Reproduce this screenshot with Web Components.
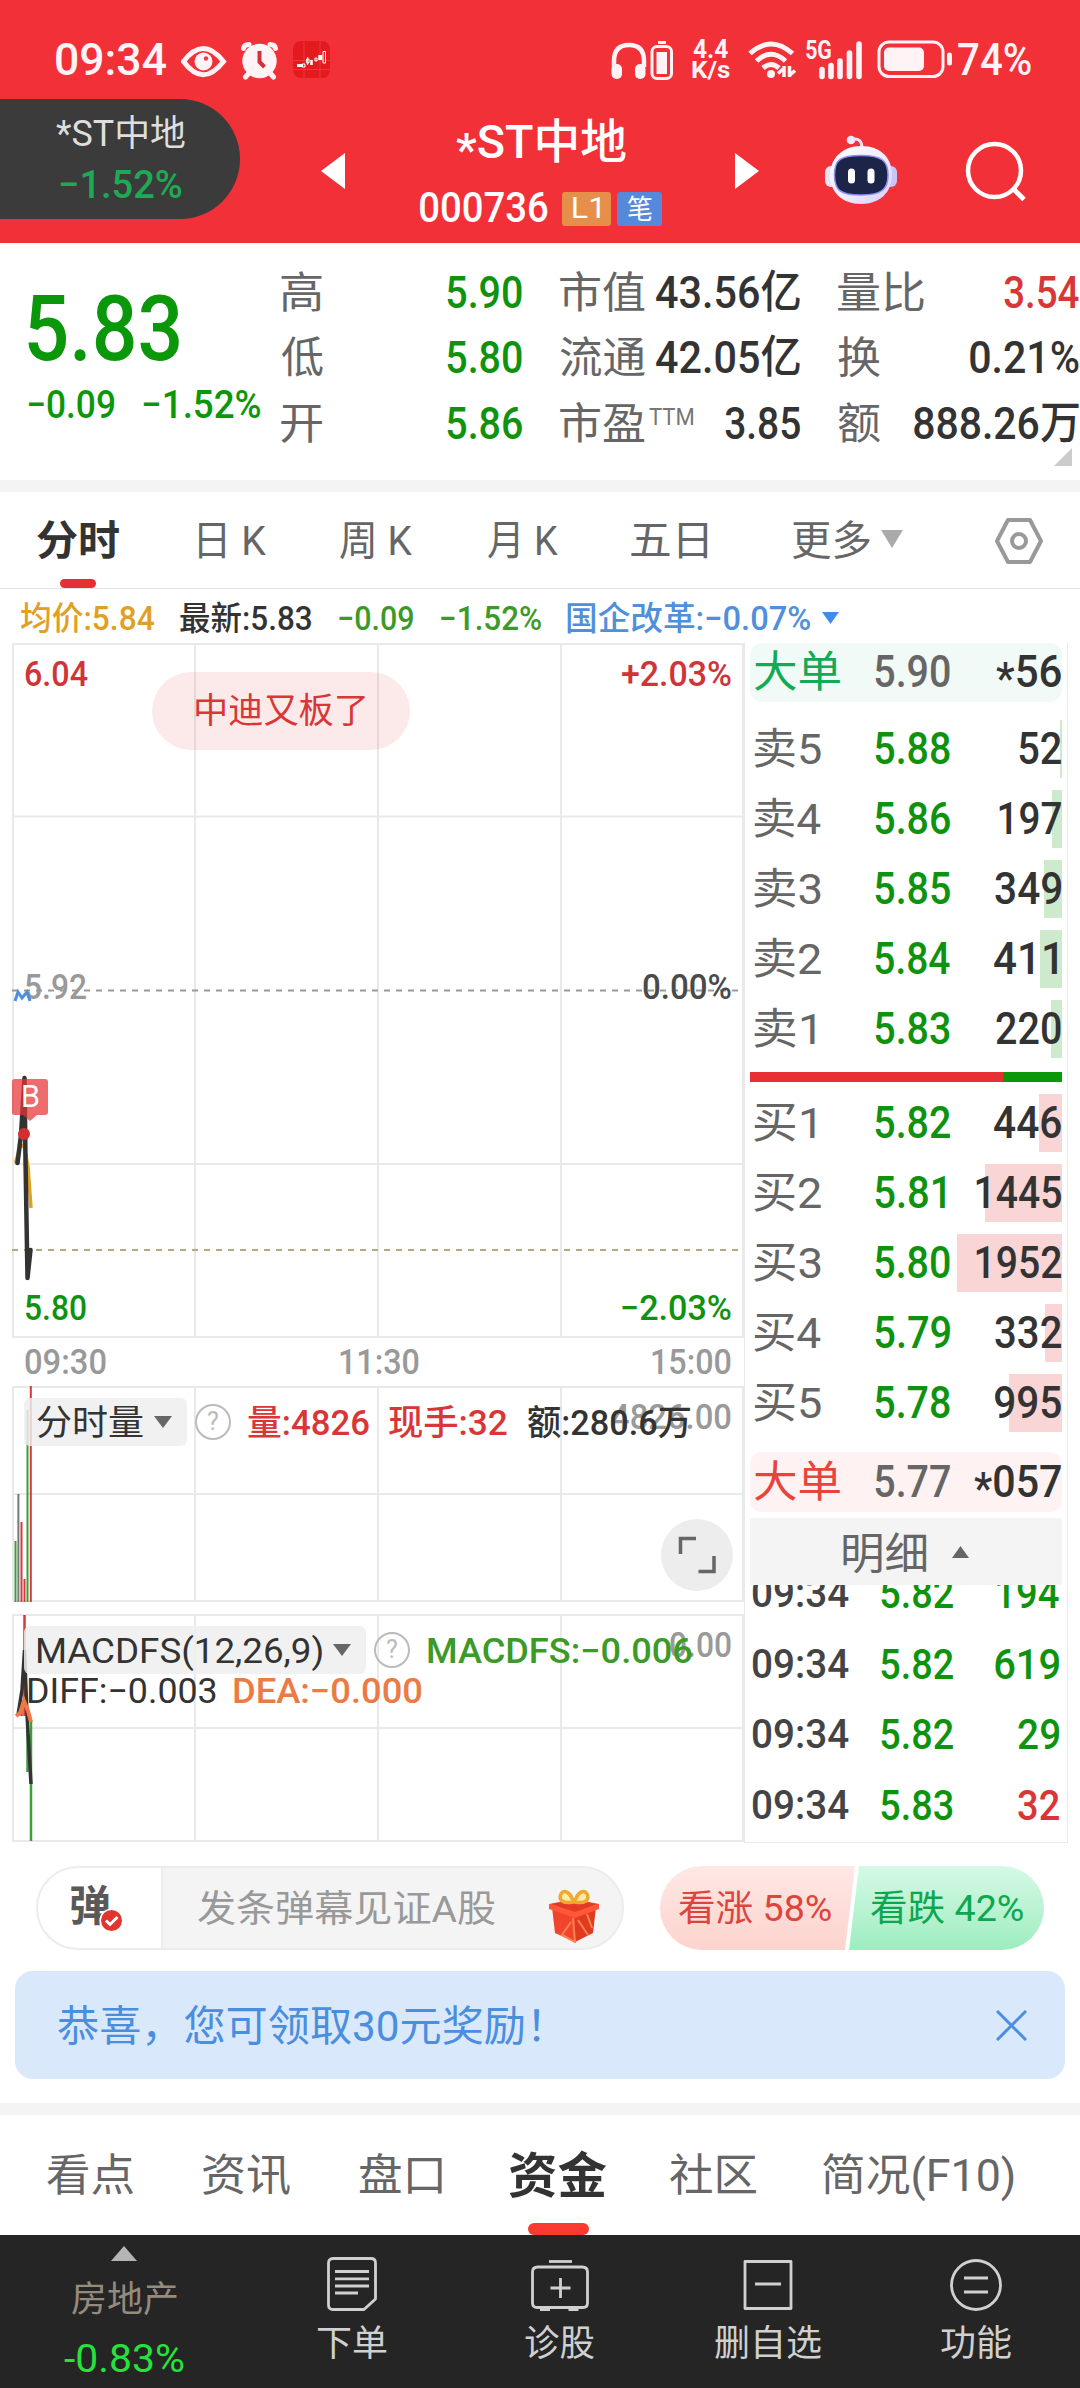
<!DOCTYPE html>
<html lang="zh-CN">
<head>
<meta charset="utf-8">
<title>*ST中地 000736</title>
<style>
  html, body { margin:0; padding:0; background:#fff; }
  body { width:1080px; height:2388px; overflow:hidden; color:#333;
    font-family:Roboto,"Noto Sans CJK SC",sans-serif; }
  stock-app { --up:#d93638; --down:#0f930f; --muted:#666; --line:#e9e9e9; --dy:2px; }
</style>
</head>
<body>
<stock-app>
  <status-bar></status-bar>
  <stock-header></stock-header>
  <quote-board></quote-board>
  <period-tabs>
    <period-tab w="82" active>分时</period-tab>
    <period-tab w="67">日 K</period-tab>
    <period-tab w="72">周 K</period-tab>
    <period-tab w="70">月 K</period-tab>
    <period-tab w="77">五日</period-tab>
    <period-tab w="78" more>更多</period-tab>
  </period-tabs>
  <info-line></info-line>
  <trade-area>
    <price-chart slot="charts"></price-chart>
    <volume-chart slot="charts"></volume-chart>
    <macd-chart slot="charts"></macd-chart>
    <order-book slot="book"></order-book>
  </trade-area>
  <danmu-bar></danmu-bar>
  <bonus-banner>恭喜，您可领取30元奖励！</bonus-banner>
  <section-tabs></section-tabs>
  <bottom-nav>
    <nav-item w="70" label="下单">
      <svg width="50" height="54" viewBox="0 0 50 54"><path d="M6 1.5H44Q48.500 1.500 48.500 6V42L37 52.500H6Q1.500 52.500 1.500 48V6Q1.500 1.500 6 1.500Z"/><path d="M8 14.500H42M8 21.800H42M8 29H42M8 36H31"/></svg>
    </nav-item>
    <nav-item w="69" label="诊股">
      <svg width="58" height="54" viewBox="0 0 58 54"><path d="M18 4.500H41"/><path d="M7 10H51Q56.500 10 56.500 15V46Q56.500 50.500 52 50.500H6Q1.500 50.500 1.500 46V15Q1.500 10 7 10ZM29.500 21V41M19.500 31H39.500M9 53H19M37.500 53H47.500"/></svg>
    </nav-item>
    <nav-item w="106" label="删自选">
      <svg width="50" height="54" viewBox="0 0 50 54"><path d="M2 4.500H48V51.500H2ZM12 27H38"/></svg>
    </nav-item>
    <nav-item w="70" label="功能">
      <svg width="52" height="54" viewBox="0 0 52 54"><circle cx="26" cy="28" r="24.500"/><path d="M14 21H38M14 35H38"/></svg>
    </nav-item>
  </bottom-nav>
</stock-app>

<script>
(function(){
  // 简单组件：样式 + 模板
  const define = (name, css, html) => {
    customElements.define(name, class extends HTMLElement {
      constructor(){
        super();
        const root = this.attachShadow({mode:'open'});
        root.innerHTML = `<style>:host{display:block;box-sizing:border-box} svg{display:block;flex:none} ${css}</style>`
          + (typeof html === 'function' ? html(this) : html);
      }
    });
  };

  // 文字按指定宽度横向缩放，模拟窄体数字
  const ctx = document.createElement('canvas').getContext('2d');
  class FitText extends HTMLElement {
    constructor(){
      super();
      this.attachShadow({mode:'open'}).innerHTML = `
        <style>
          :host{ display:block; flex:none; white-space:nowrap; line-height:40px; }
          span{ display:inline-block; transform-origin:0 50%; }
          ::slotted(i){ font-style:normal; vertical-align:-.16em; line-height:0; }
        </style><span><slot></slot></span>`;
    }
    connectedCallback(){
      const w = Number(this.getAttribute('w'));
      if (this.hasAttribute('s')) this.style.fontSize = this.getAttribute('s') + 'px';
      if (this.hasAttribute('c')) this.style.color = this.getAttribute('c');
      if (this.hasAttribute('b')) this.style.fontWeight = this.getAttribute('b');
      const cs = getComputedStyle(this);
      ctx.font = `${cs.fontWeight} ${cs.fontSize} ${cs.fontFamily}`;
      const m = ctx.measureText(this.textContent.trim());
      const k = w / (m.actualBoundingBoxRight + m.actualBoundingBoxLeft);
      this.style.width = w + 'px';
      this.shadowRoot.querySelector('span').style.transform =
        `translate(${m.actualBoundingBoxLeft * k}px, var(--dy, 0px)) scaleX(${k})`;
    }
  }
  customElements.define('fit-text', FitText);

  define('stock-app', ':host{width:1080px;display:flex;flex-direction:column}', '<slot></slot>');

  define('status-bar', `
    :host{display:flex;height:99px;padding:40px 0 0 56px;background:#f13038;color:#fff3f5;font-weight:500;--dy:0px}
    .speed{margin-left:17px;font-weight:700} .speed fit-text{line-height:20px}
  `, `
    <fit-text w="110" s="44">09:34</fit-text>
    <svg width="150" height="40" viewBox="181 40 150 40" style="margin-left:15px">
      <path d="M183.500 61.500Q203 35.500 223.500 61.500Q203 88 183.500 61.500Z" fill="none" stroke="#fff3f5" stroke-width="5"/>
      <circle cx="203.500" cy="61.500" r="9" fill="#fff3f5"/><circle cx="206" cy="58.500" r="2.200" fill="#e0424a"/>
      <g fill="none" stroke="#fff3f5" stroke-linecap="round" stroke-width="5"><path d="M243.500 48.500Q244 44.500 249 44.500M275.500 48.500Q275 44.500 270 44.500M249 73L245.500 77M270 73L273.500 77"/></g>
      <circle cx="259.500" cy="61" r="17.200" fill="#fff3f5"/><path d="M259.500 51V62L264.500 67" fill="none" stroke="#d2303a" stroke-width="4"/>
      <rect x="293" y="41" width="37" height="37" rx="8" fill="#e31b1f"/>
      <path d="M304 41V78M320 41V78M293 60.500H330M293 69.500H330" stroke="#ef4245" stroke-width=".7"/>
      <path d="M297 65.500H303" stroke="#fff" stroke-width="3"/><g fill="none" stroke="#fff" stroke-width="1"><path d="M302 64H305V67H302ZM306.500 59H309V63H306.500ZM307.700 57V65M315 58H317V61H315ZM323 51.500H325.500V63H323Z"/></g>
      <path d="M311.500 60V65M319.500 55V60M321 55V60" stroke="#fff" stroke-width="2.500"/>
    </svg>
    <svg width="64" height="40" viewBox="611 40 64 40" style="margin-left:280px">
      <path d="M614 67V61Q614 45 629 45T644 61V67" fill="none" stroke="#fff3f5" stroke-width="4.500"/>
      <rect x="611.500" y="64" width="10.500" height="15" rx="5" fill="#fff3f5"/><rect x="635" y="64" width="10.500" height="15" rx="5" fill="#fff3f5"/>
      <rect x="652" y="46.500" width="19.500" height="32" rx="5" fill="none" stroke="#fff3f5" stroke-width="3"/>
      <path d="M658 42.500H666" stroke="#fff3f5" stroke-width="3"/><path d="M656.500 52H667V74H656.500Z" fill="#fff3f5"/>
    </svg>
    <div class="speed"><fit-text w="35" s="25" style="margin-left:1px">4.4</fit-text><fit-text w="38" s="24">K/s</fit-text></div>
    <svg width="48" height="40" viewBox="749 40 48 40" style="margin-left:18px">
      <g fill="none" stroke="#fff3f5" stroke-width="5"><path d="M751 53.500Q772 34.500 793.500 53.500"/><path d="M757.500 61Q772 47.500 786.500 61"/><path d="M764 68Q772 61 780 68"/></g>
      <circle cx="772" cy="74" r="4" fill="#fff3f5"/>
      <path d="M785 66V77M779 73.500L784 69M790.500 66V77M796 70.500L791 75" stroke="#fff3f5" stroke-width="3.500"/>
    </svg>
    <fit-text w="25" s="25" b="700" style="line-height:21px;margin-left:10px">5G</fit-text>
    <svg width="44" height="40" viewBox="820 40 44 40" style="margin-left:-12px">
      <path d="M823 69.500V76.500M832 65.500V76.500M841 61V76.500M850.500 53V76.500M860 44V76.500" stroke="#fff3f5" stroke-width="5.600" stroke-linecap="round"/>
    </svg>
    <svg width="76" height="40" viewBox="878 40 76 40" style="margin-left:14px">
      <rect x="880" y="42" width="64" height="34.500" rx="10" fill="none" stroke="#fff3f5" stroke-width="3"/>
      <rect x="885" y="47.500" width="40" height="23.500" rx="5" fill="#fff3f5"/><path d="M950.500 55V63" stroke="#fff3f5" stroke-width="5" stroke-linecap="round"/>
    </svg>
    <fit-text w="73" s="44" style="margin-left:5px">74%</fit-text>
  `);

  define('stock-header', `
    :host{display:flex;height:144px;background:#f13038;color:#fff;align-items:center}
    .prev{align-self:flex-start;width:240px;height:120px;box-sizing:border-box;padding-top:13px;background:#3b3b3b;border-radius:0 60px 60px 0}
    .mid{width:390px;display:flex;flex-direction:column;align-items:center;align-self:flex-start;padding:15px 0 0 2px;box-sizing:border-box}
    .mid>fit-text{line-height:52px}
    .code{display:flex;margin-top:23px;align-items:center;--dy:-1px}
    .tag{height:34px;border-radius:3px;display:flex;justify-content:center;background:#e58f4a}
    .tag fit-text{line-height:34px}
  `, `
    <div class="prev">
      <fit-text w="129" s="36" c="#dedede" style="margin-left:56px">*ST中地</fit-text>
      <fit-text w="121" s="39" c="#1fa955" b="500" style="margin:11px 0 0 60px">−1.52%</fit-text>
    </div>
    <svg width="24" height="36" style="margin-left:81px"><path d="M0 18L24 0V36Z" fill="#fff"/></svg>
    <div class="mid">
      <fit-text w="170" s="47" b="500"><i>*</i>ST中地</fit-text>
      <div class="code">
        <fit-text w="128" s="42" b="500">000736</fit-text>
        <span class="tag" style="width:49px;margin-left:14px"><fit-text w="27" s="30">L1</fit-text></span>
        <span class="tag" style="width:45px;margin-left:6px;background:#5688db"><fit-text w="25" s="27" style="--dy:1px">笔</fit-text></span>
      </div>
    </div>
    <svg width="24" height="36"><path d="M24 18L0 0V36Z" fill="#fff"/></svg>
    <svg width="72" height="72" viewBox="0 0 72 72" style="margin:0 0 6px 66px">
      <defs><linearGradient id="h" x2="1" y2="1"><stop stop-color="#fff"/><stop offset=".55" stop-color="#f0eaff"/><stop offset="1" stop-color="#d3cfff"/></linearGradient></defs>
      <circle cx="26" cy="8" r="4.300" fill="#eee9ff"/><path d="M28 7Q37 6 37 16" fill="none" stroke="#e9e3ff" stroke-width="3"/>
      <rect x="0" y="34" width="12" height="21" rx="6" fill="#e7e3fa"/><rect x="60" y="34" width="12" height="21" rx="6" fill="#c9c4f8"/>
      <path d="M36 14C57 14 67 27 67 43C67 60 55 72 36 72C17 72 5 60 5 43C5 27 17 14 36 14Z" fill="url(#h)"/>
      <path d="M36 23.500C57 23.500 63 29 63 43S57 63 36 63S9.500 58 9.500 43S15 23.500 36 23.500Z" fill="#1c2547" stroke="#8c8cf0" stroke-width="1.500"/>
      <path d="M26.500 40V48M46 40V48" stroke="#fff" stroke-width="7" stroke-linecap="round"/>
    </svg>
    <svg width="62" height="62" viewBox="964 139 62 62" style="margin-left:67px"><circle cx="994.500" cy="169.500" r="26.500" fill="none" stroke="#fff" stroke-width="4.500"/><path d="M1013.500 188L1024 198.500" stroke="#fff" stroke-width="5"/></svg>
  `);

  const cell = (label, lw, val, vw, color, extra = '') =>
    `<div class="cell"><fit-text w="${lw}" s="43" c="#666">${label}</fit-text>${extra}<fit-text class="v" w="${vw}" s="45" b="500" c="${color}">${val}</fit-text></div>`;
  define('quote-board', `
    :host{display:flex;position:relative;height:249px;padding-top:15px;border-bottom:12px solid #f4f4f4}
    .now{width:281px;flex:none;box-sizing:border-box;padding:24px 0 0 28px;color:#0a970a}
    .chg{display:flex;gap:29px;margin-top:11px}
    .col{width:240.5px;margin-right:38px;flex:none}
    .col:last-of-type{margin-right:0}
    .cell{display:flex;height:65.500px;align-items:center}
    .v{margin-left:auto}
    .corner{position:absolute;right:8px;top:205px}
  `, `
    <div class="now"><fit-text w="151" s="91" b="500" style="line-height:90px">5.83</fit-text>
      <div class="chg"><fit-text w="86" s="39" b="500">−0.09</fit-text><fit-text w="117" s="39" b="500">−1.52%</fit-text></div></div>
    <div class="col">${cell('高',41,'5.90',75,'var(--down)')}${cell('低',42,'5.80',75,'var(--down)')}${cell('开',41,'5.86',75,'var(--down)')}</div>
    <div class="col">${cell('市值',85,'43.56亿',144,'#333')}${cell('流通',85,'42.05亿',144,'#333')}${cell('市盈',85,'3.85',75,'#333','<fit-text w="44" s="24" c="#777" style="line-height:24px;margin:-14px 0 0 4px">TTM</fit-text>')}</div>
    <div class="col">${cell('量比',86,'3.54',75,'var(--up)')}${cell('换',42,'0.21%',109,'#333')}${cell('额',42,'888.26万',165,'#333')}</div>
    <svg class="corner" width="18" height="18"><path d="M18 0V18H0Z" fill="#ccc"/></svg>
  `);

  define('period-tab', `
    :host{display:flex;flex-direction:column;align-items:center;justify-content:flex-end;height:97px;color:#666;font-size:41px}
    .t{display:flex;align-items:center;gap:11px;height:74px;margin-bottom:3px}
    .bar{width:36px;height:9px;border-radius:5px;margin-bottom:1px}
    :host([active]){color:#333;font-weight:700} :host([active]) .bar{background:#e52f33}
  `, el => `<div class="t"><fit-text w="${el.getAttribute('w')}">${el.textContent}</fit-text>${el.hasAttribute('more') ? '<svg width="22" height="18"><path d="M0 0H22L11 18Z" fill="#aaa"/></svg>' : ''}</div><div class="bar"></div>`);

  define('period-tabs', `
    :host{display:grid;grid-template-columns:156px 153px 134px 160px 133px 222px 122px;height:97px;border-bottom:1px solid #e4e4e4}
    svg{place-self:center}
  `, `<slot></slot>
    <svg width="50" height="50" viewBox="0 0 50 50" fill="none" stroke="#999" stroke-width="4"><path stroke-linejoin="round" d="M14 4H36L47 25L36 46H14L3 25Z"/><circle cx="25" cy="25" r="7"/></svg>`);

  define('info-line', `:host{display:flex;height:54px;padding-left:21px;align-items:center;font-size:33px;font-weight:500;--dy:3px}`, `
    <fit-text w="133" c="#dfa024">均价:5.84</fit-text>
    <fit-text w="131" c="#333" style="margin-left:26px">最新:5.83</fit-text>
    <fit-text w="74" c="#3c9a28" style="margin-left:28px">−0.09</fit-text>
    <fit-text w="100" c="#3c9a28" style="margin-left:28px">−1.52%</fit-text>
    <fit-text w="243" c="#4f8fdc" style="margin-left:26px">国企改革:−0.07%</fit-text>
    <svg width="17" height="12" style="margin:4px 0 0 12px"><path d="M0 0H17L8.500 12Z" fill="#3f8cec"/></svg>`);

  define('trade-area', `
    :host{display:flex;height:1201px}
    .charts{width:744px;display:flex;flex-direction:column}
  `, `<div class="charts"><slot name="charts"></slot></div><slot name="book"></slot>`);

  // 图表坐标统一使用整页坐标
  const grid = (top, bottom, mid) => `<g stroke="#e9e9e9" stroke-width="2" fill="none">
    <path d="M13 ${top}H743V${bottom}H13ZM195 ${top}V${bottom}M378 ${top}V${bottom}M561 ${top}V${bottom}"/><path d="${mid.map(y => `M13 ${y}H743`).join('')}"/></g>`;
  const label = (x, y, w, text, color, size = 35, weight = 500) =>
    `<text x="${x}" y="${y}" textLength="${w}" lengthAdjust="spacingAndGlyphs" fill="${color}" font-size="${size}" font-weight="${weight}">${text}</text>`;

  define('price-chart', ':host{height:742px}', `
    <svg width="744" height="742" viewBox="0 643 744 742">
      ${grid(644, 1337, [816.5, 1164])}
      <path d="M12 990.500H743" stroke="#999" stroke-width="2" stroke-dasharray="6 6"/>
      <path d="M12 1250H743" stroke="#b8a87f" stroke-width="2" stroke-dasharray="6 6"/>
      <rect x="152" y="672" width="258" height="78" rx="39" fill="#e52f33" fill-opacity=".1"/>
      ${label(193, 723, 176, '中迪又板了', '#d93638', 35, 400)}
      ${label(24, 686, 64, '6.04', '#cf3537')}${label(621, 686, 111, '+2.03%', '#cf3537')}
      ${label(24, 999, 63, '5.92', '#999')}${label(642, 999, 90, '0.00%', '#4a4a4a')}
      ${label(24, 1320, 63, '5.80', '#0f930f')}${label(620, 1320, 112, '−2.03%', '#0f930f')}
      ${label(24, 1374, 83, '09:30', '#999')}${label(338, 1374, 82, '11:30', '#999')}${label(650, 1374, 82, '15:00', '#999')}
      <path d="M15 1001L18 992L22 998L27 992L30 1001" fill="none" stroke="#4b8fde" stroke-width="3"/>
      <path d="M15.500 1163L20 1147L24 1145L28 1167L31 1208" fill="none" stroke="#e0a020" stroke-width="3.500"/>
      <path d="M17.500 1163L21 1135L24.500 1078L25.500 1160L27.500 1278L30.500 1250" fill="none" stroke="#333" stroke-width="4.500" stroke-linejoin="round" stroke-linecap="round"/>
      <path d="M21 1135L24.500 1090L26 1130Z" fill="#333"/>
      <path d="M15 1079H45Q48 1079 48 1082V1112Q48 1115 45 1115H37L30 1121L23 1115H15Q12 1115 12 1112V1082Q12 1079 15 1079Z" fill="#e83335" fill-opacity=".72"/>
      ${label(21, 1107, 19, 'B', '#fff', 31, 400)}
      <circle cx="24" cy="1134" r="6" fill="#d22f31"/>
    </svg>`);

  define('chart-menu', `
    :host{display:flex;align-items:center;height:48px;font-size:35px}
    .tag{display:flex;align-items:center;gap:11px;height:48px;padding:0 15px 0 13px;margin-right:8px;border-radius:6px;background:rgba(238,238,238,.84);color:#333}
    .q{width:36px;height:36px;box-sizing:border-box;border:2.500px solid #bbb;border-radius:50%;color:#bbb;font-size:25px;line-height:32px;text-align:center}
  `, el => `<div class="tag"><fit-text w="${el.getAttribute('w')}">${el.getAttribute('name')}</fit-text><svg width="18" height="12"><path d="M0 0H18L9 12Z" fill="#666"/></svg></div><div class="q">?</div><slot></slot>`);

  define('volume-chart', `
    :host{position:relative;height:229px}
    chart-menu{position:absolute;left:24px;top:13px}
    .full{position:absolute;left:661px;top:134px}
  `, `
    <svg width="744" height="229" viewBox="0 1385 744 229">
      ${grid(1387, 1601, [1494])}
      <g stroke-width="2"><path d="M15.500 1541V1602M27.500 1410V1602" stroke="#3f9c3a"/><path d="M18.400 1494V1602" stroke="#777"/><path d="M21.500 1522V1602M24.500 1579V1602M30.800 1386V1602" stroke="#d23a3c"/></g>
      ${label(611, 1429, 121, '4826.00', '#999')}
    </svg>
    <chart-menu w="106" name="分时量">
      <fit-text w="121" b="500" c="#d93638" style="margin-left:17px">量:4826</fit-text>
      <fit-text w="118" b="500" c="#d93638" style="margin-left:20px">现手:32</fit-text>
      <fit-text w="162" b="500" c="#333" style="margin-left:21px">额:280.6万</fit-text>
    </chart-menu>
    <svg class="full" width="72" height="72"><circle cx="36" cy="36" r="36" fill="#ededed"/><path d="M19.500 35V19.500H35M53 37V52.500H37.500" fill="none" stroke="#666" stroke-width="3.500"/></svg>`);

  define('macd-chart', `
    :host{position:relative;height:230px}
    chart-menu{position:absolute;left:24px;top:12px}
    .line2{position:absolute;left:28px;top:56px;display:flex;gap:18px;font-size:35px}
  `, `
    <svg width="744" height="230" viewBox="0 1614 744 230">
      ${grid(1615, 1841, [1728])}
      <path d="M24.500 1615V1716M21.500 1700V1716" stroke="#d23a3c" stroke-width="2.500"/>
      <path d="M31 1720V1841M27.500 1716V1772" stroke="#3f9c3a" stroke-width="2.500"/>
      <path d="M18 1715L22 1690L24.500 1650L27 1715L31 1784" fill="none" stroke="#333" stroke-width="3.500"/>
      <path d="M16 1716L20 1713L24 1701L28 1711L31 1722" fill="none" stroke="#ec7a45" stroke-width="4"/>
      ${label(669, 1657, 63, '0.00', '#999')}
    </svg>
    <chart-menu w="285" name="MACDFS(12,26,9)"><fit-text w="264" b="500" c="#3c9a28" style="margin-left:18px">MACDFS:−0.006</fit-text></chart-menu>
    <div class="line2"><fit-text w="188" c="#333">DIFF:−0.003</fit-text><fit-text w="188" b="500" c="#ec7a45">DEA:−0.000</fit-text></div>`);

  define('book-row', `
    :host{display:flex;align-items:center;height:58px;padding:0 1px 0 4px;margin-bottom:12px;font-size:45px}
    .l{width:121px;flex:none}
    .v{margin-left:auto}
    :host([kind=sell]){background:linear-gradient(#cdeacd,#cdeacd) right/var(--bar) 100% no-repeat}
    :host([kind=buy]){background:linear-gradient(#f9d5d6,#f9d5d6) right/var(--bar) 100% no-repeat}
    :host([kind=bigsell]){height:59px;margin:0 0 18px;border-radius:12px;background:#f1faf6;--dy:-1px}
    :host([kind=bigbuy]){height:60px;margin:20px 0 6px;border-radius:12px;background:#fef3f2}
  `, el => {
    const a = n => el.getAttribute(n), big = a('kind').startsWith('big');
    const lc = a('kind') === 'bigsell' ? '#12aa54' : big ? '#e8433c' : '#666';
    return `<div class="l"><fit-text w="${big ? 86 : a('lw') || 67}" s="43" c="${lc}">${a('label')}</fit-text></div>
      <fit-text w="${a('price').endsWith('1') ? 70 : 75}" b="500" c="${big ? '#666' : '#0f930f'}">${a('price')}</fit-text>
      <fit-text class="v" w="${a('w')}" b="500" c="#333" ${a('label') === '卖2' ? 'style="margin-right:4px"' : ''}>${a('vol').replace('*', '<i>*</i>')}</fit-text>`;
  });

  const rows = (kind, list) => list.map(([l, p, v, w, bar, lw]) =>
    `<book-row kind="${kind}" label="${l}" price="${p}" vol="${v}" w="${w}" lw="${lw || 67}" style="--bar:${bar}px"></book-row>`).join('');
  const tick = (p, v, w, c) => `<div class="tick"><fit-text w="96" s="41" b="500" c="#444">09:34</fit-text>
    <fit-text w="72" s="43" b="500" c="#0f930f">${p}</fit-text><fit-text class="v" w="${w}" s="43" b="500" c="${c}">${v}</fit-text></div>`;
  define('order-book', `
    :host{width:324px;height:1200px;border:1px solid #e9e9e9;border-top:0;padding:0 5px;display:flex;flex-direction:column;--dy:0px}
    .ratio{height:10px;margin:2px 0 12px;background:linear-gradient(90deg,#e73033 81%,#0a970a 81%);flex:none}
    .head{height:67px;background:#f4f4f4;display:flex;align-items:center;justify-content:center;gap:26px;flex:none;--dy:2px}
    .ticks{flex:1;min-height:0;overflow:hidden;--dy:-1px}
    .tick{display:flex;align-items:center;height:70.500px;padding:0 3px}
    .tick:first-child{margin-top:-26px}
    .tick>:nth-child(2){margin-left:32px} .v{margin-left:auto}
  `, `
    ${rows('bigsell', [['大单','5.90','*56',65,0]])}
    ${rows('sell', [['卖5','5.88','52',42,2],['卖4','5.86','197',62,10],['卖3','5.85','349',66,18],['卖2','5.84','411',63,22],['卖1','5.83','220',65,11,61]])}
    <div class="ratio"></div>
    ${rows('buy', [['买1','5.82','446',67,23,61],['买2','5.81','1445',85,77],['买3','5.80','1952',85,105],['买4','5.79','332',66,17]])}
    <book-row kind="buy" label="买5" price="5.78" vol="995" w="66" style="--bar:53px;margin-bottom:0"></book-row>
    ${rows('bigbuy', [['大单','5.77','*057',87,0]])}
    <div class="head"><fit-text w="83" s="43" c="#666">明细</fit-text><svg width="17" height="12"><path d="M0 12H17L8.500 0Z" fill="#666"/></svg></div>
    <div class="ticks">${tick('5.82','194',62,'#0f930f')}${tick('5.82','619',64,'#0f930f')}${tick('5.82','29',41,'#0f930f')}${tick('5.83','32',41,'#d93638')}</div>`);

  define('danmu-bar', `
    :host{display:flex;height:127px;padding:22px 36px 0}
    .input{width:588px;height:84px;box-sizing:border-box;border:2px solid #ececec;border-radius:42px;background:linear-gradient(90deg,#fff 123px,#ececec 123px,#ececec 125px,#f4f4f4 125px);display:flex;align-items:center}
    .vote{display:flex;margin-left:36px;width:384px;height:84px;border-radius:42px;overflow:hidden;--dy:1px}
    .vote>div{display:flex;align-items:center;height:84px}
    .up{width:199px;background:linear-gradient(#fee8e5,#fdd3cd);clip-path:polygon(0 0,195px 0,185px 100%,0 100%);padding-left:19px;box-sizing:border-box}
    .down{width:195px;margin-left:-10px;padding-left:22px;box-sizing:border-box;background:linear-gradient(#d6f9e6,#9eedbf);clip-path:polygon(10px 0,100% 0,100% 100%,0 100%)}
  `, `
    <div class="input">
      <svg width="54" height="54" viewBox="70 1880 54 54" style="margin-left:32px">
        <text x="69" y="1920" font-size="42" font-weight="700" fill="#595959">弹</text>
        <circle cx="111.500" cy="1919.500" r="12" fill="#fff"/><circle cx="111.500" cy="1919.500" r="10.500" fill="#e0362f"/><path d="M106 1919.500L110 1923.500L117.500 1916" fill="none" stroke="#fff" stroke-width="3"/>
      </svg>
      <fit-text w="297" s="37" c="#999" style="margin-left:74px">发条弹幕见证A股</fit-text>
      <svg width="54" height="54" viewBox="0 0 54 54" style="margin:16px 0 0 52px">
        <path d="M5 18L28 26V53L8 44Z" fill="#f0452c"/><path d="M49 18L28 26V53L46 44Z" fill="#e03a20"/>
        <path d="M2 15L27 10L52 15V20L28 29L2 20Z" fill="#ff5738"/><path d="M4 15L27 11L50 15L28 23Z" fill="#e23a27"/>
        <path d="M26 29L28 53L15 46L24 33M31 31L41 46M40 25L45 39" fill="none" stroke="#ff8050" stroke-width="2"/>
        <path d="M26 13C16 15 11 11 14 5C17 0 24 3 26 13ZM28 13C38 15 43 11 40 5C37 0 30 3 28 13Z" fill="#ffe9a8" stroke="#efa92c" stroke-width="3.500"/>
      </svg>
    </div>
    <div class="vote">
      <div class="up"><fit-text w="152" s="36" c="#dc453d">看涨 58%</fit-text></div>
      <div class="down"><fit-text w="152" s="36" c="#0fa651">看跌 42%</fit-text></div>
    </div>`);

  define('bonus-banner', `
    :host{display:flex;align-items:center;justify-content:space-between;width:1050px;height:108px;margin:0 15px 24px;padding:0 38px 0 43px;border-radius:18px;background:#dae8fb}
  `, el => `<fit-text w="482" s="42" c="#4a8ee0">${el.textContent}</fit-text>
    <svg width="31" height="31" stroke="#4a8ee0" stroke-width="3"><path d="M1 1L30 30M30 1L1 30"/></svg>`);

  define('section-tabs', `
    :host{display:grid;grid-template-columns:179px 135px 172px 144px 166px 245px;height:132px;border-top:12px solid #f4f4f4;color:#666;font-size:44px}
    div{display:flex;flex-direction:column;align-items:center;padding-top:39px}
    .on{font-size:49px;font-weight:700;color:#333;--dy:3px}
    b{width:61px;height:12px;border-radius:6px;background:#fb3a30;margin-top:29px}
  `, `
    <div><fit-text w="86">看点</fit-text></div><div><fit-text w="87">资讯</fit-text></div><div><fit-text w="83">盘口</fit-text></div>
    <div class="on"><fit-text w="98">资金</fit-text><b></b></div><div><fit-text w="86">社区</fit-text></div><div><fit-text w="191">简况(F10)</fit-text></div>`);

  define('nav-item', `
    :host{display:flex;flex-direction:column;align-items:center;padding-top:22px;color:#d0d0d0;font-size:36px}
    fit-text{margin-top:11px}
    ::slotted(svg){display:block;fill:none;stroke:#d0d0d0;stroke-width:2.800px;stroke-linejoin:round}
  `, el => `<slot></slot><fit-text w="${el.getAttribute('w')}">${el.getAttribute('label')}</fit-text>`);

  define('bottom-nav', `
    :host{display:grid;grid-template-columns:248px 208px 207px 209px 208px;height:153px;background:#252525}
    .sector{display:flex;flex-direction:column;align-items:center;padding-top:11px}
  `, `<div class="sector"><svg width="26" height="15"><path d="M0 15H26L13 0Z" fill="#b5b5b5"/></svg>
      <fit-text w="105" s="36" c="#958b7d" style="margin-top:17px">房地产</fit-text><fit-text w="120" s="38" c="#24e33a" style="margin-top:21px;--dy:0px">-0.83%</fit-text></div><slot></slot>`);
})();
</script>
</body>
</html>
